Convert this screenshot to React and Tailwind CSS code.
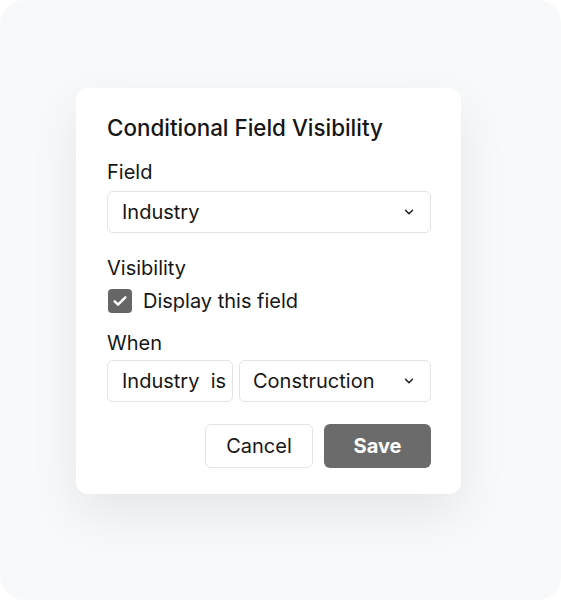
import React from 'react';

const Chevron = () => (
    <svg width="14" height="14" viewBox="0 0 24 24" fill="none" stroke="#222" strokeWidth="2.6" strokeLinecap="round" strokeLinejoin="round">
        <path d="M6 9l6 6 6-6" />
    </svg>
);

export default function App() {
    return (
        <div className="w-[561px] h-[600px] bg-white" style={{ fontFamily: 'Inter, "Noto Sans", sans-serif' }}>
            <div className="w-full h-full rounded-[24px] bg-[#f8f9fa] pt-[88px] pl-[76px]">
                <div className="w-[385px] h-[406px] bg-white rounded-[12px] shadow-[0_20px_50px_rgba(0,0,0,0.08)] pl-[31px] pr-[30px] pt-[26px] text-[#161616]">
                    {/* Title */}
                    <h2 className="text-[22.4px] leading-[28px] font-medium whitespace-nowrap">Conditional Field Visibility</h2>

                    {/* Field */}
                    <div className="mt-[18px] text-[20px] leading-[24px]">Field</div>
                    <div className="mt-[7px] h-[42px] border border-[#e3e3e3] rounded-[6px] flex items-center justify-between pl-[14px] pr-[14px] text-[20px]">
                        <span>Industry</span>
                        <Chevron />
                    </div>

                    {/* Visibility */}
                    <div className="mt-[23px] text-[20px] leading-[24px]">Visibility</div>
                    <div className="mt-[9px] flex items-center gap-[11px] h-[24px]">
                        <div className="ml-[1px] w-[24px] h-[24px] rounded-[4px] bg-[#666] flex items-center justify-center">
                            <svg width="16" height="16" viewBox="0 0 24 24" fill="none" stroke="white" strokeWidth="3.6" strokeLinecap="round" strokeLinejoin="round">
                                <path d="M4 12.5l5 5L20 6.5" />
                            </svg>
                        </div>
                        <span className="text-[20px]">Display this field</span>
                    </div>

                    {/* When */}
                    <div className="mt-[18px] text-[20px] leading-[24px]">When</div>
                    <div className="mt-[5px] flex gap-[6px]">
                        <div className="w-[126px] h-[42px] border border-[#e3e3e3] rounded-[6px] flex items-center pl-[14px] text-[20px] whitespace-nowrap">
                            Industry&nbsp;&nbsp;is
                        </div>
                        <div className="flex-1 h-[42px] border border-[#e3e3e3] rounded-[6px] flex items-center justify-between pl-[13px] pr-[14px] text-[20px]">
                            <span>Construction</span>
                            <Chevron />
                        </div>
                    </div>

                    {/* Actions */}
                    <div className="mt-[22px] flex justify-end gap-[11px]">
                        <button className="w-[108px] h-[44px] border border-[#e3e3e3] rounded-[6px] bg-white text-[20px]">
                            Cancel
                        </button>
                        <button className="w-[107px] h-[44px] rounded-[6px] bg-[#6b6b6b] text-white text-[20px] font-bold">
                            Save
                        </button>
                    </div>
                </div>
            </div>
        </div>
    );
}
